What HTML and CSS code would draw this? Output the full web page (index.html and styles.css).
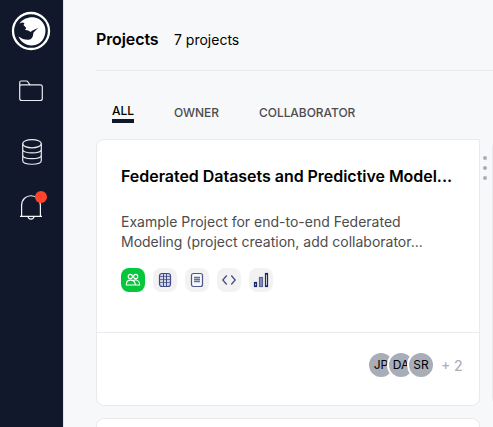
FILE: index.html
```html
<!DOCTYPE html>
<html lang="en">
<head>
<meta charset="utf-8">
<title>Projects</title>
<link rel="stylesheet" href="styles.css">
</head>
<body>
<div class="app">
  <nav class="sidebar">
    <svg class="logo" viewBox="0 0 40 40">
      <circle cx="20" cy="20" r="18" fill="none" stroke="#fff" stroke-width="2.300"/>
      <path fill="#fff" d="M8.500 12.500C13 6 22 4.500 28 8C34.500 12 36 20 33 26.500C29.500 34.500 19 37 12 31.500C9.500 29.500 8.300 27.500 7.500 25.500C11.500 28.500 17.500 30 20.200 27.700C22.300 26 22 23.500 22.500 21.500L27 17L21.500 19.500L19.500 21L17.800 19.800L14 18.800L15.300 17L12.500 14L13.500 12L11 11.500Z"/>
    </svg>
    <svg class="folder" viewBox="0 0 24 22" fill="none" stroke="#e9ebf0" stroke-width="1.200">
      <path d="M.7 6V2.500Q.7 1 2.200 1H7.500Q8.500 1 9 2L11 4.800H21.300Q23.300 4.800 23.300 6.800V18.500Q23.300 20.500 21.300 20.500H2.700Q.7 20.500.7 18.500V6.800Q.7 4.800 2.700 4.800H11"/>
    </svg>
    <svg class="database" viewBox="0 0 20 26" fill="none" stroke="#e9ebf0" stroke-width="1.200">
      <ellipse cx="10" cy="4.700" rx="9.300" ry="4.100"/>
      <path d="M.7 4.500V21.500C.7 26.500 19.300 26.500 19.300 21.500V4.500M.7 10.200C.7 15.200 19.300 15.200 19.300 10.200M.7 15.900C.7 20.900 19.300 20.900 19.300 15.900"/>
    </svg>
    <div class="alerts">
      <svg class="bell" viewBox="0 0 22 26" fill="none" stroke="#f3f4f7" stroke-width="1.200">
        <path d="M1.600 22V11.500C1.600 -1.500 20.400 -1.500 20.400 11.500V22M0 22.400H22M8 22.500C8.300 25.900 13.700 25.900 14 22.500"/>
      </svg>
      <span class="alert-dot"></span>
    </div>
  </nav>
  <main class="content">
    <header class="heading">
      <h1>Projects</h1>
      <span class="count">7 projects</span>
    </header>
    <div class="tabs">
      <span class="tab active">ALL</span>
      <span class="tab owner">OWNER</span>
      <span class="tab">COLLABORATOR</span>
    </div>
    <div class="grid">
      <article class="card first">
        <div class="details">
          <h2>Federated Datasets and Predictive Model...</h2>
          <p>Example Project for end-to-end Federated<br>Modeling (project creation, add collaborator...</p>
          <div class="tools">
            <span class="tool team"><svg viewBox="0 0 24 24" fill="none" stroke="#fff" stroke-width="1.100">
              <circle cx="9.300" cy="8.500" r="2.100"/><circle cx="14.700" cy="8.500" r="2.100"/>
              <path d="M5.300 17C5.300 10.500 13.500 10.500 14.500 17ZM12 12.800C15 10.600 18.700 12.500 18.700 17H14.500"/>
            </svg></span>
            <span class="tool"><svg viewBox="0 0 24 24" fill="none" stroke="#3f4b85">
              <rect x="6.500" y="5.500" width="11" height="13" rx="2.500" fill="#d3d6e4" stroke-width="1.200"/>
              <path d="M10.500 5.500V18.500M13.500 5.500V18.500"/>
              <path d="M6.500 8.500H17.500M6.500 11.500H17.500M6.500 14.500H17.500" stroke-width=".7"/>
            </svg></span>
            <span class="tool"><svg viewBox="0 0 24 24" fill="none" stroke="#49558b">
              <rect x="6.500" y="5.500" width="11" height="13" rx="2" fill="#f7f8fb" stroke-width="1.200"/>
              <path d="M9 9.500H15M9 11.500H15M9 13.500H15" stroke="#6670a0" stroke-width="1.600"/>
            </svg></span>
            <span class="tool"><svg viewBox="0 0 24 24" fill="none" stroke="#3c4982" stroke-width="1.200">
              <path d="M9.700 7.500L5.800 12L9.700 16.500M14.300 7.500L18.200 12L14.300 16.500"/>
            </svg></span>
            <span class="tool"><svg viewBox="0 0 24 24" fill="none" stroke="#1c2a6c" stroke-width="1.200">
              <rect x="5.500" y="14.500" width="2" height="4"/>
              <rect x="10.500" y="9.500" width="3" height="9" fill="#8990b4" stroke="#59638f"/>
              <rect x="16.500" y="5.500" width="2" height="13"/>
            </svg></span>
          </div>
        </div>
        <footer class="members">
          <span class="avatar">JP</span>
          <span class="avatar">DA</span>
          <span class="avatar">SR</span>
          <span class="more">+ 2</span>
        </footer>
      </article>
      <div class="menu"><i></i><i></i><i></i></div>
      <div class="card"></div>
      <div class="card"></div>
    </div>
  </main>
</div>
</body>
</html>
```
FILE: styles.css
```css
* { box-sizing: border-box; }
body { margin: 0; overflow: hidden; font-family: Inter, sans-serif; color: #000; }
h1, h2, p { margin: 0; }
svg { display: block; }

.app { display: flex; width: 493px; height: 427px; overflow: hidden; background: #f7f8fa; }

.sidebar {
  flex: 0 0 64px;
  display: flex;
  flex-direction: column;
  align-items: flex-start;
  padding-top: 11px;
  background: #12182b;
  border-right: 1px solid #e3e4eb;
}
.logo { width: 40px; height: 40px; margin-left: 11px; }
.folder { width: 24px; height: 22px; margin: 29px 0 0 19px; }
.database { width: 20px; height: 26px; margin: 37px 0 0 22px; }
.alerts { position: relative; width: 22px; height: 26px; margin: 29px 0 0 20px; }
.bell { width: 22px; height: 26px; }
.alert-dot {
  position: absolute;
  top: -3px;
  right: -5px;
  width: 12px;
  height: 12px;
  border-radius: 50%;
  background: #ff432c;
}

.content { flex: none; width: 820px; padding-left: 32px; }
.heading {
  display: flex;
  align-items: center;
  height: 71px;
  padding-top: 9px;
  border-bottom: 1px solid #e9ebee;
}
.heading h1 { width: 78px; margin-top: -1px; font-size: 16px; font-weight: 600; line-height: 20px; letter-spacing: -.1px; }
.count { font-size: 14px; line-height: 20px; }

.tabs { display: flex; height: 68px; padding: 32px 0 0 16px; }
.tab { padding-top: 2px; font-size: 12px; font-weight: 500; line-height: 16px; letter-spacing: -.05px; color: #4c4c4e; }
.active { width: 22px; height: 20px; padding-top: 0; margin-right: 40px; border-bottom: 4px solid #12182b; color: #000; }
.owner { width: 45px; margin-right: 40px; }

.grid {
  display: grid;
  grid-template-columns: 384px 12px 384px;
  grid-template-rows: 267px 267px;
  row-gap: 12px;
}
.card {
  display: flex;
  flex-direction: column;
  background: #fff;
  border: 1px solid #e9eaee;
  border-radius: 8px;
}
.first { border-top-right-radius: 2px; }
.details { height: 193px; padding: 26px 24px 0; border-bottom: 1px solid #e9eaee; }
.details h2 { font-size: 16px; font-weight: 600; line-height: 20px; letter-spacing: -.035px; white-space: nowrap; }
.details p { margin-top: 26px; font-size: 14px; line-height: 20px; white-space: nowrap; color: #4c4c4e; }
.tools { display: flex; gap: 8px; margin-top: 16px; }
.tool { width: 24px; height: 24px; border-radius: 8px; background: #f2f2f2; }
.team { background: #06c73b; }

.members { display: flex; align-items: center; height: 63px; padding-left: 270px; }
.avatar {
  flex: none;
  width: 28px;
  height: 28px;
  margin-right: -8px;
  border: 2px solid #fff;
  border-radius: 50%;
  background: #a9adb8;
  font-size: 12px;
  line-height: 24px;
  text-align: center;
}
.more { margin: 2px 0 0 14px; font-size: 14px; font-weight: 500; line-height: 20px; color: #adb0b9; }

.menu { display: flex; flex-direction: column; align-items: flex-start; gap: 6px; padding: 17px 0 0 3px; }
.menu i { width: 4px; height: 4px; border-radius: 50%; background: #a9adb8; }
```
